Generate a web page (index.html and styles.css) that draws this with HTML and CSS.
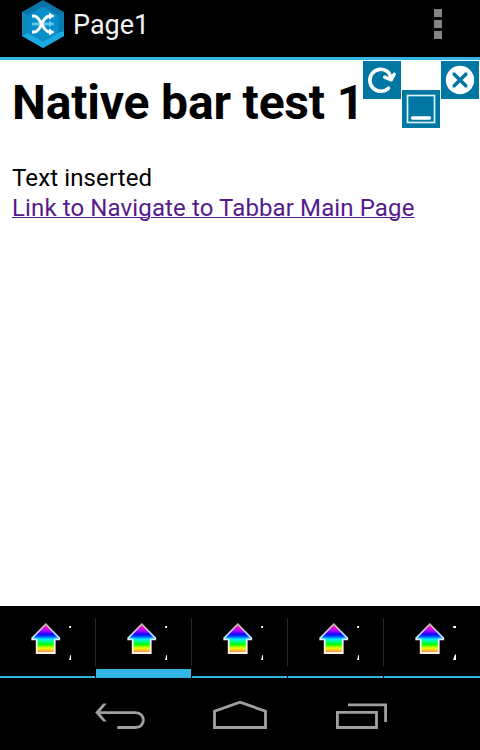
FILE: index.html
```
<!DOCTYPE html>
<html lang="en">
<head>
<meta charset="utf-8">
<title>Page1</title>
<link rel="stylesheet" href="styles.css">
</head>
<body>
<svg width="0" height="0" class="defs" aria-hidden="true">
  <defs>
    <linearGradient id="rainbow" x1="0" y1="0" x2="0" y2="1">
      <stop offset="0" stop-color="#ff4050"/>
      <stop offset=".13" stop-color="#ff00d0"/>
      <stop offset=".24" stop-color="#9800ff"/>
      <stop offset=".35" stop-color="#1000ff"/>
      <stop offset=".42" stop-color="#0048ff"/>
      <stop offset=".52" stop-color="#00f0ff"/>
      <stop offset=".61" stop-color="#00ff80"/>
      <stop offset=".7" stop-color="#00ff00"/>
      <stop offset=".81" stop-color="#d0ff00"/>
      <stop offset=".87" stop-color="#ffe800"/>
      <stop offset=".93" stop-color="#ffa040"/>
      <stop offset="1" stop-color="#ffb090"/>
    </linearGradient>
    <linearGradient id="edge" x1="0" y1="0" x2="0" y2="1">
      <stop offset="0" stop-color="#c0b0b0"/>
      <stop offset=".45" stop-color="#b8e4ff"/>
      <stop offset=".6" stop-color="#fff"/>
      <stop offset="1" stop-color="#fff0ea"/>
    </linearGradient>
    <symbol id="house" viewBox="0 0 95 60">
      <path d="M45.7 12.2 59.3 26V27.3H54.7V41H36.7V27.3H32.2V26Z" fill="url(#rainbow)" stroke="url(#edge)" stroke-width="1.8"/>
    </symbol>
    <symbol id="tab" viewBox="0 0 95 60">
      <use href="#house" width="95" height="60"/>
      <path d="M69.2 14H71V16H69.2ZM71 43V48H69L70.4 43Z" fill="#fff"/>
    </symbol>
    <symbol id="tab-wide" viewBox="0 0 95 60">
      <use href="#house" width="95" height="60"/>
      <path d="M69.2 14H72V16H69.2ZM72 42.5V48H69L71 42.5Z" fill="#fff"/>
    </symbol>
  </defs>
</svg>
<header class="action-bar">
  <svg class="logo" width="44" height="50" viewBox="0 0 44 50">
    <path d="M21 0 42 12V36L21 48 0 36V12Z" fill="#0a74a6"/>
    <path d="M0 36 5.5 32.5 21 41.5 36.5 32.5 42 31V36L21 48Z" fill="#1ca9e2"/>
    <path d="M0 12 5.5 15.5V32.5L0 36Z" fill="#1189bd"/>
    <path d="M36.5 15.5 42 12V31L36.5 32.5Z" fill="#087db0"/>
    <path d="M21 6.5 36.5 15.5V32.5L21 41.5 5.5 32.5V15.5Z" fill="#078fc9"/>
    <g fill="none" stroke-width="2.8">
      <path d="M10 24H29" stroke="#69c5eb"/>
      <path d="M27 21 32.5 24 27 27Z" fill="#69c5eb"/>
      <path d="M10 16H12C19 16 20 32 28 32M10 32H12C20 32 19 16 28 16" stroke="#fff"/>
    </g>
    <path d="M27 12.5 32.8 16 27 19.5ZM27 28.5 32.8 32 27 35.5Z" fill="#fff"/>
  </svg>
  <span class="title">Page1</span>
  <span class="overflow"><i></i><i></i><i></i></span>
</header>
<main>
  <h1>Native bar test 1</h1>
  <p>Text inserted</p>
  <a href="#">Link to Navigate to Tabbar Main Page</a>
  <div class="tools">
    <svg class="tool" viewBox="0 0 38 38" fill="none" stroke="#fff" stroke-width="3.6" stroke-linecap="round" stroke-linejoin="round">
      <path d="M25.5 27.2A11 11 0 1 1 24.5 10.5Q27 12.5 28 18"/>
      <path d="M21.7 16.2 28.3 18.8 31.2 13.3" stroke-width="3.4"/>
    </svg>
    <svg class="tool lower" viewBox="0 0 38 38">
      <rect x="5.5" y="5.5" width="27" height="27" fill="none" stroke="#d8f2fb" stroke-width="1.7"/>
      <path d="M10.5 28H27.5" stroke="#fff" stroke-width="3.3" stroke-linecap="round"/>
    </svg>
    <svg class="tool" viewBox="0 0 38 38">
      <circle cx="19" cy="19" r="14.2" fill="#fff"/>
      <path d="M13.2 13.2 24.8 24.8M24.8 13.2 13.2 24.8" stroke="#0077a3" stroke-width="3.6" stroke-linecap="round"/>
    </svg>
  </div>
</main>
<nav class="tabs">
  <div class="tab"><svg viewBox="0 0 95 60"><use href="#tab"/></svg></div>
  <div class="tab active"><svg viewBox="0 0 95 60"><use href="#tab"/></svg></div>
  <div class="tab"><svg viewBox="0 0 95 60"><use href="#tab"/></svg></div>
  <div class="tab"><svg viewBox="0 0 95 60"><use href="#tab"/></svg></div>
  <div class="tab"><svg viewBox="0 0 95 60"><use href="#tab-wide"/></svg></div>
</nav>
<footer class="system-bar">
  <svg width="480" height="72" viewBox="0 678 480 72" fill="none" stroke="#a0a0a0" stroke-width="2.8">
    <path d="M98 712.6H135.5C146 712.6 146 727.5 135.5 727.5H117.3"/>
    <path d="M103.2 703.5H106.7L99.3 712.5 106.7 721.6H103.2L95.2 712.5Z" fill="#a0a0a0" stroke="none"/>
    <path d="M214.5 727.5V711.2L240 702.2 265.5 711.2V727.5Z"/>
    <path d="M337.4 712.4H376.5V727.5H337.4ZM348 704.8H385.6V722"/>
  </svg>
</footer>
</body>
</html>
```

FILE: styles.css
```
* { box-sizing: border-box; }
body {
  margin: 0;
  width: 480px;
  height: 750px;
  overflow: hidden;
  display: flex;
  flex-direction: column;
  background: #000;
  font-family: Roboto, sans-serif;
}
.defs { position: absolute; }
.action-bar {
  height: 60px;
  flex: none;
  display: flex;
  align-items: flex-start;
  border-bottom: 3px solid #33b5e5;
  padding: 0 38px 0 22px;
  color: #f3f3f3;
}
.title {
  margin-left: 7px;
  padding-top: 9px;
  font-size: 27px;
  line-height: 32px;
}
.overflow {
  margin-left: auto;
  padding-top: 9px;
  display: grid;
  gap: 3px;
}
.overflow i { width: 8px; height: 8px; background: #858585; }
main {
  position: relative;
  height: 546px;
  flex: none;
  padding: 15px 12px 0;
  background: #fff;
  color: #000;
  font-size: 24px;
  line-height: 30px;
  letter-spacing: 0.12px;
}
h1 {
  margin: 0 0 32px;
  font-size: 48px;
  line-height: 56px;
  letter-spacing: -0.18px;
  white-space: nowrap;
}
p { margin: 0; }
a {
  color: #551a8b;
  white-space: nowrap;
  text-decoration-thickness: 1px;
}
.tools {
  position: absolute;
  top: 1px;
  right: 1px;
  display: flex;
  align-items: flex-start;
  gap: 1px;
}
.tool { width: 38px; height: 38px; background: #0077a3; }
.lower { margin-top: 29px; }
.tabs {
  height: 72px;
  flex: none;
  display: grid;
  grid-template-columns: repeat(5, 96px);
}
.tab {
  height: 72px;
  border-right: 1px solid #000;
  background:
    linear-gradient(#33b5e5, #33b5e5) 0 70px / 100% 2px no-repeat;
  position: relative;
}
.tab svg { display: block; width: 95px; height: 60px; margin-top: 6px; }
.tab:not(:last-child)::after {
  content: "";
  position: absolute;
  right: -1px;
  top: 12px;
  width: 1px;
  height: 48px;
  background: #292929;
}
.tab:last-child { border-right: 0; }
.active {
  background: linear-gradient(#33b5e5, #33b5e5) 0 63px / 100% 9px no-repeat;
}
.system-bar { height: 72px; flex: none; }
.system-bar svg { display: block; }
```
